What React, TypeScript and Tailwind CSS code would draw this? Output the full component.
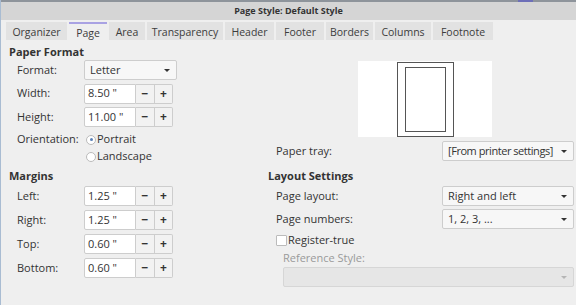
import React from "react";

const font = { fontFamily: '"Open Sans", "Noto Sans", sans-serif' };

function Spin({ value }: { value: string }) {
  return (
    <div className="flex h-[20px]">
      <div className="w-[52px] h-full bg-white border border-[#cdcdcd] rounded-l-[2px] pl-[3px] flex items-center text-[11px] text-[#333]">{value}</div>
      <div className="w-[19px] h-full bg-[#f2f2f2] border-y border-r border-[#cdcdcd] flex items-center justify-center text-[12px] font-bold text-[#333]">−</div>
      <div className="w-[18px] h-full bg-[#f2f2f2] border-y border-r border-[#cdcdcd] rounded-r-[2px] flex items-center justify-center text-[12px] font-bold text-[#333]">+</div>
    </div>
  );
}

function Drop({ value, w, disabled, tight }: { value: string; w: string; disabled?: boolean; tight?: boolean }) {
  return (
    <div className={`${w} h-[20px] border rounded-[2px] flex items-center justify-between pl-[5px] pr-[6px] text-[11px] whitespace-nowrap ${disabled ? "bg-[#e6e6e6] border-[#d6d6d6] text-[#aaa]" : "bg-[#f7f7f7] border-[#cdcdcd] text-[#333]"}`}>
      <span className={tight ? "tracking-[-0.45px]" : ""}>{value}</span>
      <svg width="6" height="3" viewBox="0 0 6 3" className="shrink-0"><path d="M0 0h6L3 3z" fill={disabled ? "#b5b5b5" : "#333"} /></svg>
    </div>
  );
}

function Row({ label, children }: { label: string; children: React.ReactNode }) {
  return (
    <div className="flex items-center h-[20px]">
      <div className="w-[67px] pl-[8px] text-[11px] text-[#333] box-content">{label}</div>
      {children}
    </div>
  );
}

const tabs: [string, string][] = [
  ["Organizer", "w-[61px]"],
  ["Page", "w-[38px]"],
  ["Area", "w-[36px]"],
  ["Transparency", "w-[76px]"],
  ["Header", "w-[49px]"],
  ["Footer", "w-[48px]"],
  ["Borders", "w-[47px]"],
  ["Columns", "w-[56px]"],
  ["Footnote", "w-[60px]"],
];

export default function App() {
  return (
    <div style={font} className="w-[576px] h-[305px] bg-[#efefef] flex flex-col overflow-hidden border-l border-[#a9bcd2]">
      <div className="h-[2px] bg-[#8e949b] flex">
        <div className="ml-[517px] w-[15px] h-full bg-[#6d6fb8]" />
      </div>
      <div className="h-[18px] bg-[#d5d5d5] flex items-center justify-center text-[9px] font-bold text-[#333]">
        Page Style: Default Style
      </div>
      <div className="h-[20px] flex items-end pl-[5px] gap-[2px]">
        {tabs.map(([t, w]) => (
          <div
            key={t}
            className={`${w} h-[18px] flex items-center justify-center pt-[3px] text-[10.5px] text-[#3c3c3c] ${t === "Page" ? "bg-[#efefef] border-t-2 border-[#a9a2e3]" : "bg-[#e2e2e2]"}`}
          >
            {t}
          </div>
        ))}
      </div>
      <div className="flex flex-1">
        <div className="w-[267px] pl-[8px] flex flex-col">
          <div className="mt-[4px] h-[16px] text-[11px] font-bold text-[#333] flex items-center">Paper Format</div>
          <div className="mt-[0px] flex flex-col gap-[3.5px]">
            <Row label="Format:"><Drop value="Letter" w="w-[93px]" /></Row>
            <Row label="Width:"><Spin value='8.50 "' /></Row>
            <Row label="Height:"><Spin value='11.00 "' /></Row>
          </div>
          <div className="flex items-center h-[17px] mt-[4px]">
            <div className="w-[69px] pl-[8px] text-[11px] text-[#333] box-content">Orientation:</div>
            <div className="flex items-center text-[11px] text-[#333]">
              <span className="w-[10px] h-[10px] rounded-full border border-[#bbb] bg-white flex items-center justify-center mr-[1px]">
                <span className="w-[3px] h-[3px] rounded-full bg-[#5b82b8]" />
              </span>
              Portrait
            </div>
          </div>
          <div className="flex items-center h-[17px] pl-[77px] text-[11px] text-[#333]">
            <span className="w-[10px] h-[10px] rounded-full border border-[#bbb] bg-white mr-[1px]" />
            Landscape
          </div>
          <div className="mt-[3px] h-[16px] text-[11px] font-bold text-[#333] flex items-center">Margins</div>
          <div className="mt-[2px] flex flex-col gap-[4px]">
            <Row label="Left:"><Spin value='1.25 "' /></Row>
            <Row label="Right:"><Spin value='1.25 "' /></Row>
            <Row label="Top:"><Spin value='0.60 "' /></Row>
            <Row label="Bottom:"><Spin value='0.60 "' /></Row>
          </div>
        </div>
        <div className="flex-1 flex flex-col pr-[2px]">
          <div className="mt-[21px] ml-[90px] w-[134px] h-[76px] bg-white flex items-center justify-center">
            <div className="w-[57px] h-[75px] border border-[#555] flex items-center justify-center">
              <div className="w-[41px] h-[65px] border border-[#555]" />
            </div>
          </div>
          <div className="mt-[4px] flex items-center justify-between h-[20px]">
            <span className="pl-[8px] text-[11px] text-[#333]">Paper tray:</span>
            <Drop value="[From printer settings]" w="w-[132px]" tight />
          </div>
          <div className="mt-[7px] h-[16px] text-[11px] font-bold text-[#333] flex items-center">Layout Settings</div>
          <div className="mt-[2px] flex items-center justify-between h-[20px]">
            <span className="pl-[8px] text-[11px] text-[#333]">Page layout:</span>
            <Drop value="Right and left" w="w-[132px]" />
          </div>
          <div className="mt-[3px] flex items-center justify-between h-[20px]">
            <span className="pl-[8px] text-[11px] text-[#333]">Page numbers:</span>
            <Drop value="1, 2, 3, ..." w="w-[132px]" />
          </div>
          <div className="mt-[3px] flex items-center h-[16px] pl-[8px] text-[11px] text-[#333]">
            <span className="w-[11px] h-[11px] border border-[#bbb] bg-white rounded-[1px] mr-[1px]" />
            Register-true
          </div>
          <div className="mt-[2px] h-[16px] flex items-center pl-[15px] text-[11px] text-[#9a9a9a]">Reference Style:</div>
          <div className="mt-[1px] pl-[15px]">
            <Drop value="" w="w-[291px]" disabled />
          </div>
        </div>
      </div>
    </div>
  );
}
